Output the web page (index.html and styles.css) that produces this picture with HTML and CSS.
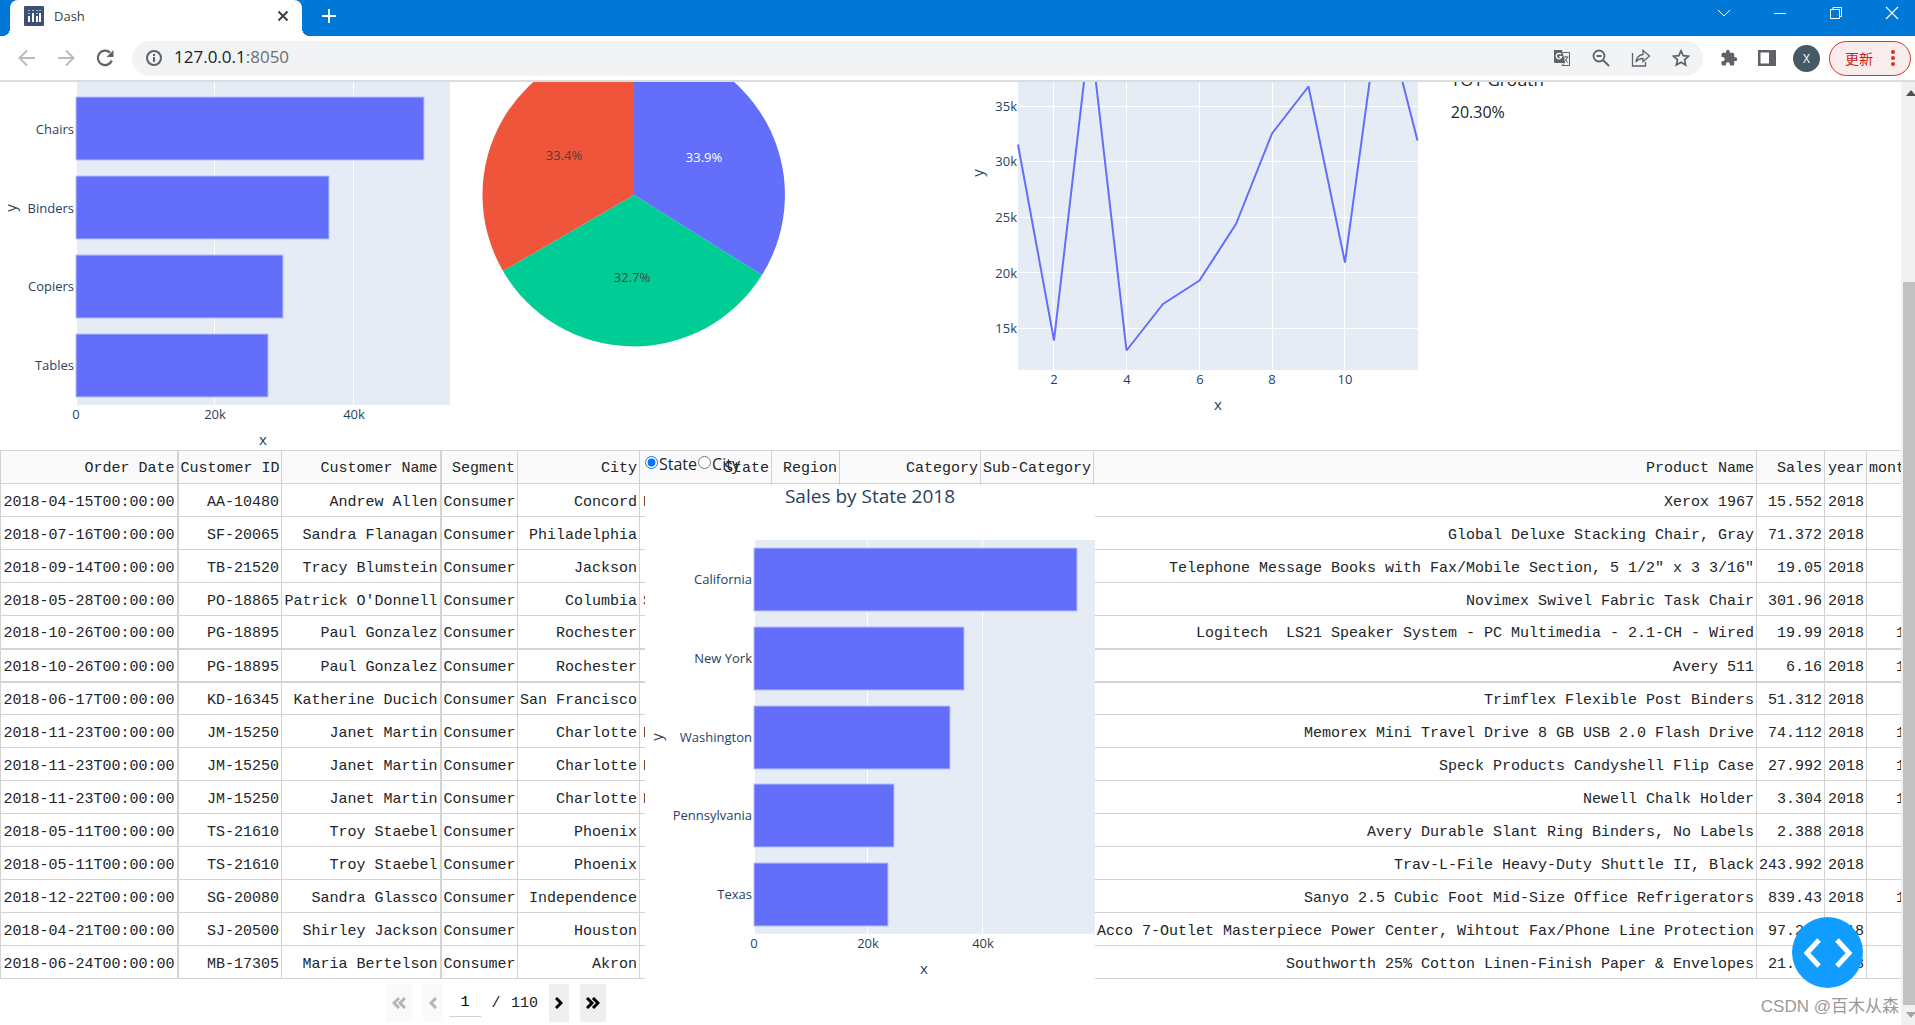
FILE: index.html
```html
<!DOCTYPE html>
<html lang="en">
<head>
<meta charset="utf-8">
<title>Dash</title>
<link rel="stylesheet" href="styles.css">
</head>
<body>
<header class="browser">
  <div class="tabstrip">
    <div class="tab">
      <svg class="favicon" width="20" height="20" viewBox="0 0 20 20"><rect width="20" height="20" rx="1" fill="#3f4f75"/><g fill="#fff"><rect x="4" y="10" width="2" height="6"/><rect x="8" y="7" width="2" height="9"/><rect x="12" y="10" width="2" height="6"/><rect x="15" y="7" width="2" height="9"/></g><g fill="#7fd0b8"><rect x="4" y="4" width="2" height="1"/><rect x="4" y="7" width="2" height="1"/><rect x="8" y="4" width="2" height="1"/><rect x="12" y="4" width="2" height="1"/><rect x="12" y="7" width="2" height="1"/><rect x="15" y="4" width="2" height="1"/></g></svg>
      <span class="tab-title">Dash</span>
      <button class="icon-btn" aria-label="Close tab"><svg width="12" height="12" viewBox="0 0 12 12"><path d="M1.5 1.5l9 9M10.5 1.5l-9 9" stroke="#3c4043" stroke-width="2"/></svg></button>
    </div>
    <button class="icon-btn new-tab" aria-label="New tab"><svg width="16" height="16" viewBox="0 0 16 16"><path d="M8 1v14M1 8h14" stroke="#fff" stroke-width="2"/></svg></button>
    <div class="window-controls">
      <button class="icon-btn" aria-label="Search tabs"><svg width="14" height="14" viewBox="0 0 14 14"><path d="M1 4l6 6 6-6" fill="none" stroke="#fff"/></svg></button>
      <button class="icon-btn" aria-label="Minimize"><svg width="14" height="14" viewBox="0 0 14 14"><path d="M1 7.500h12" stroke="#fff"/></svg></button>
      <button class="icon-btn" aria-label="Restore"><svg width="14" height="14" viewBox="0 0 14 14"><path d="M1.500 3.500h9v9h-9zM4 3.500v-2h8.500v9h-2" fill="none" stroke="#fff"/></svg></button>
      <button class="icon-btn" aria-label="Close"><svg width="14" height="14" viewBox="0 0 14 14"><path d="M1 1l12 12M13 1L1 13" stroke="#fff" stroke-width="1.200"/></svg></button>
    </div>
  </div>
  <div class="toolbar">
    <div class="nav">
      <button class="icon-btn" aria-label="Back"><svg width="18" height="18" viewBox="0 0 18 18"><path d="M17 9H2M9 1.500L1.500 9 9 16.500" fill="none" stroke="#babcbe" stroke-width="2"/></svg></button>
      <button class="icon-btn" aria-label="Forward"><svg width="18" height="18" viewBox="0 0 18 18"><path d="M1 9h15M9 1.500L16.500 9 9 16.500" fill="none" stroke="#babcbe" stroke-width="2"/></svg></button>
      <button class="icon-btn" aria-label="Reload"><svg width="18" height="18" viewBox="0 0 18 18"><path d="M15.800 11.500A7.200 7.200 0 1 1 14 3.600" fill="none" stroke="#5f6368" stroke-width="2.200"/><path d="M17.500 1v7h-7z" fill="#5f6368"/></svg></button>
    </div>
    <div class="omnibox">
      <svg width="18" height="18" viewBox="0 0 18 18"><circle cx="9" cy="9" r="7" fill="none" stroke="#5f6368" stroke-width="2"/><path d="M9 8v5M9 5v2" stroke="#5f6368" stroke-width="2"/></svg>
      <span class="url">127.0.0.1<span class="port">:8050</span></span>
      <div class="omni-icons">
        <svg width="18" height="18" viewBox="0 0 18 18"><path d="M1 1h8l3 13H2a1 1 0 0 1-1-1z" fill="#5f6368"/><path d="M10 3.500h6.500v13H9l2-2" fill="none" stroke="#5f6368"/><path d="M8 5.300a2.700 2.700 0 1 0 .6 2.400H6.300" fill="none" stroke="#fff" stroke-width="1.300"/><path d="M10.500 8h5M13 7v1M14.500 8c-.5 2.500-2 4-3.500 5M11.500 9.500c1 2 2 3 3.500 4" fill="none" stroke="#5f6368"/></svg>
        <svg width="18" height="18" viewBox="0 0 18 18"><circle cx="7" cy="7" r="5.500" fill="none" stroke="#5f6368" stroke-width="1.800"/><path d="M11 11l6 6M4.500 7h5" stroke="#5f6368" stroke-width="1.800"/></svg>
        <svg width="20" height="18" viewBox="0 0 20 18"><path d="M1.500 4v13h13v-4" fill="none" stroke="#5f6368" stroke-width="1.300"/><path d="M12 1.500l6.500 5.500-6.500 5.500V9.500c-3 0-5 .8-7 3.500.6-4.500 3-7 7-7.500z" fill="none" stroke="#5f6368" stroke-width="1.300"/></svg>
        <svg width="18" height="18" viewBox="0 0 18 18"><path d="M9 1.800l2.200 4.900 5.300.5-4 3.600 1.200 5.300L9 13.300l-4.700 2.800 1.200-5.300-4-3.600 5.300-.5z" fill="none" stroke="#5f6368" stroke-width="1.700"/></svg>
      </div>
    </div>
    <div class="actions">
      <svg width="18" height="18" viewBox="0 0 24 24"><path d="M20.500 11H19V7a2 2 0 0 0-2-2h-4V3.500a2.500 2.500 0 0 0-5 0V5H4a2 2 0 0 0-2 2v3.800h1.500a2.700 2.700 0 0 1 0 5.400H2V20a2 2 0 0 0 2 2h3.800v-1.500a2.700 2.700 0 0 1 5.400 0V22H17a2 2 0 0 0 2-2v-4h1.500a2.500 2.500 0 0 0 0-5z" fill="#5f6368"/></svg>
      <svg width="18" height="18" viewBox="0 0 18 18"><path d="M0 1h18v16H0zM2.500 3.500v11H11v-11z" fill="#5f6368" fill-rule="evenodd"/></svg>
      <span class="avatar">X</span>
      <button class="update">更新<svg width="4" height="16" viewBox="0 0 4 16"><g fill="#d93025"><circle cx="2" cy="2" r="2"/><circle cx="2" cy="8" r="2"/><circle cx="2" cy="14" r="2"/></g></svg></button>
    </div>
  </div>
</header>

<main class="viewport">
  <div class="page">
    <section class="charts">
      <svg class="chart" viewBox="0 0 475 368" preserveAspectRatio="xMinYMin">
        <rect x="77" y="0" width="373" height="323" fill="#e5ecf6"/>
        <path d="M214.500 0v323M353.500 0v323" stroke="#fff"/>
        <g class="bar"><rect x="76" y="15" width="348" height="63"/><rect x="76" y="94" width="253" height="63"/><rect x="76" y="173" width="207" height="63"/><rect x="76" y="252" width="192" height="63"/></g>
        <g class="tick end"><text x="74" y="52">Chairs</text><text x="74" y="131">Binders</text><text x="74" y="209">Copiers</text><text x="74" y="288">Tables</text></g>
        <g class="tick mid"><text x="76" y="337">0</text><text x="215" y="337">20k</text><text x="354" y="337">40k</text></g>
        <text class="axis" x="263" y="363">x</text>
        <text class="axis" transform="translate(16 126) rotate(-90)">y</text>
      </svg>
      <svg class="chart" viewBox="475 0 475 368" preserveAspectRatio="xMinYMin">
        <path d="M634 113V-38A151 151 0 0 1 762 193z" fill="#636efa"/>
        <path d="M634 113L762 193A151 151 0 0 1 503 189z" fill="#00cc96"/>
        <path d="M634 113L503 189A151 151 0 0 1 634-38z" fill="#ef553b"/>
        <g class="tick mid"><text x="704" y="80" class="light">33.9%</text><text x="564" y="78" class="dark">33.4%</text><text x="632" y="200" class="dark">32.7%</text></g>
      </svg>
      <svg class="chart" viewBox="951 0 475 368" preserveAspectRatio="xMinYMin">
        <rect x="1018" y="0" width="400" height="288" fill="#e5ecf6"/>
        <path d="M1018 24.500h400M1018 79.500h400M1018 135.500h400M1018 190.500h400M1018 246.500h400M1053.500 0v288M1126.500 0v288M1199.500 0v288M1272.500 0v288M1344.500 0v288" stroke="#fff"/>
        <path d="M1018 62.500L1054 258.500 1090-52 1126.500 268.500 1163 222 1199.500 198.500 1236 142 1272 51.500 1308.500 4.500 1345 180.500 1381-84 1417.500 58.500" fill="none" stroke="#636efa" stroke-width="2" stroke-linejoin="bevel"/>
        <g class="tick end"><text x="1017" y="29">35k</text><text x="1017" y="84">30k</text><text x="1017" y="140">25k</text><text x="1017" y="196">20k</text><text x="1017" y="251">15k</text></g>
        <g class="tick mid"><text x="1054" y="302">2</text><text x="1127" y="302">4</text><text x="1200" y="302">6</text><text x="1272" y="302">8</text><text x="1345" y="302">10</text></g>
        <text class="axis" x="1218" y="328">x</text>
        <text class="axis" transform="translate(983 91) rotate(-90)">y</text>
      </svg>
      <div class="kpi">
        <h2>YOY Grouth</h2>
        <p>20.30%</p>
      </div>
    </section>

    <section class="orders">
      <table>
        <colgroup><col class="w-date"><col class="w-id"><col class="w-name"><col class="w-segment"><col class="w-city"><col class="w-state"><col class="w-num"><col class="w-category"><col class="w-sub"><col class="w-product"><col class="w-num"><col class="w-year"><col class="w-month"></colgroup>
        <thead><tr><th>Order Date</th><th>Customer ID</th><th>Customer Name</th><th>Segment</th><th>City</th><th>State</th><th>Region</th><th>Category</th><th>Sub-Category</th><th>Product Name</th><th>Sales</th><th>year</th><th>month</th></tr></thead>
        <tbody>
          <tr><td>2018-04-15T00:00:00</td><td>AA-10480</td><td>Andrew Allen</td><td>Consumer</td><td>Concord</td><td>North Carolina</td><td></td><td></td><td></td><td>Xerox 1967</td><td>15.552</td><td>2018</td><td></td></tr>
          <tr><td>2018-07-16T00:00:00</td><td>SF-20065</td><td>Sandra Flanagan</td><td>Consumer</td><td>Philadelphia</td><td></td><td></td><td></td><td></td><td>Global Deluxe Stacking Chair, Gray</td><td>71.372</td><td>2018</td><td></td></tr>
          <tr><td>2018-09-14T00:00:00</td><td>TB-21520</td><td>Tracy Blumstein</td><td>Consumer</td><td>Jackson</td><td></td><td></td><td></td><td></td><td>Telephone Message Books with Fax/Mobile Section, 5 1/2" x 3 3/16"</td><td>19.05</td><td>2018</td><td></td></tr>
          <tr><td>2018-05-28T00:00:00</td><td>PO-18865</td><td>Patrick O'Donnell</td><td>Consumer</td><td>Columbia</td><td>South Carolina</td><td></td><td></td><td></td><td>Novimex Swivel Fabric Task Chair</td><td>301.96</td><td>2018</td><td></td></tr>
          <tr class="rule"><td>2018-10-26T00:00:00</td><td>PG-18895</td><td>Paul Gonzalez</td><td>Consumer</td><td>Rochester</td><td></td><td></td><td></td><td></td><td>Logitech&nbsp; LS21 Speaker System - PC Multimedia - 2.1-CH - Wired</td><td>19.99</td><td>2018</td><td>10</td></tr>
          <tr class="rule"><td>2018-10-26T00:00:00</td><td>PG-18895</td><td>Paul Gonzalez</td><td>Consumer</td><td>Rochester</td><td></td><td></td><td></td><td></td><td>Avery 511</td><td>6.16</td><td>2018</td><td>10</td></tr>
          <tr><td>2018-06-17T00:00:00</td><td>KD-16345</td><td>Katherine Ducich</td><td>Consumer</td><td>San Francisco</td><td></td><td></td><td></td><td></td><td>Trimflex Flexible Post Binders</td><td>51.312</td><td>2018</td><td></td></tr>
          <tr><td>2018-11-23T00:00:00</td><td>JM-15250</td><td>Janet Martin</td><td>Consumer</td><td>Charlotte</td><td>North Carolina</td><td></td><td></td><td></td><td>Memorex Mini Travel Drive 8 GB USB 2.0 Flash Drive</td><td>74.112</td><td>2018</td><td>11</td></tr>
          <tr><td>2018-11-23T00:00:00</td><td>JM-15250</td><td>Janet Martin</td><td>Consumer</td><td>Charlotte</td><td>North Carolina</td><td></td><td></td><td></td><td>Speck Products Candyshell Flip Case</td><td>27.992</td><td>2018</td><td>11</td></tr>
          <tr><td>2018-11-23T00:00:00</td><td>JM-15250</td><td>Janet Martin</td><td>Consumer</td><td>Charlotte</td><td>North Carolina</td><td></td><td></td><td></td><td>Newell Chalk Holder</td><td>3.304</td><td>2018</td><td>11</td></tr>
          <tr><td>2018-05-11T00:00:00</td><td>TS-21610</td><td>Troy Staebel</td><td>Consumer</td><td>Phoenix</td><td></td><td></td><td></td><td></td><td>Avery Durable Slant Ring Binders, No Labels</td><td>2.388</td><td>2018</td><td></td></tr>
          <tr><td>2018-05-11T00:00:00</td><td>TS-21610</td><td>Troy Staebel</td><td>Consumer</td><td>Phoenix</td><td></td><td></td><td></td><td></td><td>Trav-L-File Heavy-Duty Shuttle II, Black</td><td>243.992</td><td>2018</td><td></td></tr>
          <tr><td>2018-12-22T00:00:00</td><td>SG-20080</td><td>Sandra Glassco</td><td>Consumer</td><td>Independence</td><td></td><td></td><td></td><td></td><td>Sanyo 2.5 Cubic Foot Mid-Size Office Refrigerators</td><td>839.43</td><td>2018</td><td>12</td></tr>
          <tr><td>2018-04-21T00:00:00</td><td>SJ-20500</td><td>Shirley Jackson</td><td>Consumer</td><td>Houston</td><td></td><td></td><td></td><td></td><td>Acco 7-Outlet Masterpiece Power Center, Wihtout Fax/Phone Line Protection</td><td>97.264</td><td>2018</td><td></td></tr>
          <tr><td>2018-06-24T00:00:00</td><td>MB-17305</td><td>Maria Bertelson</td><td>Consumer</td><td>Akron</td><td></td><td></td><td></td><td></td><td>Southworth 25% Cotton Linen-Finish Paper &amp; Envelopes</td><td>21.936</td><td>2018</td><td></td></tr>
        </tbody>
      </table>
      <nav class="pager">
        <button disabled aria-label="First page"><svg width="14" height="12" viewBox="0 0 14 12"><path d="M7 1L2 6l5 5M13 1L8 6l5 5"/></svg></button>
        <button disabled class="single" aria-label="Previous page"><svg width="8" height="12" viewBox="0 0 8 12"><path d="M7 1L2 6l5 5"/></svg></button>
        <span class="pages"><input value="1" aria-label="Page"><span>/</span><span>110</span></span>
        <button class="single" aria-label="Next page"><svg width="8" height="12" viewBox="0 0 8 12"><path d="M1 1l5 5-5 5"/></svg></button>
        <button aria-label="Last page"><svg width="14" height="12" viewBox="0 0 14 12"><path d="M1 1l5 5-5 5M7 1l5 5-5 5"/></svg></button>
      </nav>

      <div class="sales-panel">
        <div class="choices">
          <label><input type="radio" name="level" checked>State</label><label><input type="radio" name="level">City</label>
        </div>
        <svg class="sales-chart" viewBox="645 485 450 540" preserveAspectRatio="xMinYMin">
          <text class="title" x="870" y="503">Sales by State 2018</text>
          <rect x="755" y="540" width="340" height="394" fill="#e5ecf6"/>
          <path d="M867.500 540v394M982.500 540v394" stroke="#fff"/>
          <g class="bar"><rect x="754" y="548" width="323" height="63"/><rect x="754" y="627" width="210" height="63"/><rect x="754" y="706" width="196" height="63"/><rect x="754" y="784" width="140" height="63"/><rect x="754" y="863" width="134" height="63"/></g>
          <g class="tick end"><text x="752" y="584">California</text><text x="752" y="663">New York</text><text x="752" y="742">Washington</text><text x="752" y="820">Pennsylvania</text><text x="752" y="899">Texas</text></g>
          <g class="tick mid"><text x="754" y="948">0</text><text x="868" y="948">20k</text><text x="983" y="948">40k</text></g>
          <text class="axis" x="924" y="974">x</text>
          <text class="axis" transform="translate(662 737) rotate(-90)">y</text>
        </svg>
      </div>
    </section>

    <button class="debug" aria-label="Debug menu"><svg width="48" height="30" viewBox="0 0 48 30"><path d="M15 2L3 15l12 13M33 2l12 13-12 13" fill="none" stroke="#fff" stroke-width="5"/></svg></button>
    <span class="watermark">CSDN @百木从森</span>
  </div>
  <div class="scrollbar">
    <svg width="9" height="6" viewBox="0 0 9 6"><path d="M0 6l5-6 5 6z" fill="#505050"/></svg>
    <div class="track"><div class="thumb"></div></div>
    <svg width="9" height="6" viewBox="0 0 9 6"><path d="M0 0l5 6 5-6z" fill="#a3a3a3"/></svg>
  </div>
</main>
</body>
</html>
```
FILE: styles.css
```css
* { box-sizing: border-box; }
body {
  margin: 0;
  height: 100vh;
  display: flex;
  flex-direction: column;
  overflow: hidden;
  background: #fff;
  color: #212529;
  font-family: "Open Sans", "Noto Sans CJK SC", sans-serif;
  font-size: 16px;
}
button { border: 0; padding: 0; font: inherit; }
svg { display: block; flex: none; }

/* Browser frame */
.browser { border-bottom: 2px solid #dadcde; }
.tabstrip { display: flex; align-items: center; height: 36px; padding-left: 10px; background: #0078d7; }
.tab {
  display: flex; align-items: center; gap: 10px;
  width: 292px; height: 36px; padding: 0 13px 4px 14px;
  background: #fff; border-radius: 8px 8px 0 0;
  position: relative;
}
.tab::before, .tab::after {
  content: ""; position: absolute; bottom: 0; width: 8px; height: 8px;
}
.tab::before { left: -8px; background: radial-gradient(circle at 0 0, transparent 8px, #fff 8px); }
.tab::after { right: -8px; background: radial-gradient(circle at 100% 0, transparent 8px, #fff 8px); }
.tab-title { flex: 1; font-size: 13px; color: #3c4043; }
.icon-btn { display: grid; place-items: center; background: none; }
.new-tab { margin-left: 19px; padding-bottom: 4px; }
.window-controls { display: flex; gap: 42px; margin-left: auto; padding: 0 16px 10px 0; }
.toolbar { display: flex; align-items: center; height: 44px; padding: 0 4px 0 18px; }
.nav { display: flex; gap: 21px; width: 114px; }
.omnibox {
  flex: 1; display: flex; align-items: center; gap: 11px;
  height: 35px; padding: 0 13px; border-radius: 18px; background: #f1f3f4;
}
.url { flex: 1; font-size: 17px; line-height: 22px; padding-bottom: 2px; color: #202124; }
.port { color: #6b6f74; }
.omni-icons { display: flex; gap: 21px; }
.actions { display: flex; align-items: center; gap: 20px; padding-left: 17px; }
.avatar {
  display: grid; place-items: center; width: 27px; height: 27px; margin: 0 -11px 0 -3px;
  border-radius: 50%; background: #455a64; color: #fff; font-size: 12px;
}
.update {
  display: flex; align-items: center; justify-content: space-between;
  width: 82px; height: 35px; padding: 0 15px;
  border: 1px solid #d93025; border-radius: 18px; background: #f9ecec;
  color: #c5221f; font-size: 14px;
}

/* Scrolled page */
.viewport { flex: 1; min-height: 0; display: grid; grid-template-columns: 1fr 14px; }
.page { position: relative; overflow: hidden; }
.charts { display: grid; grid-template-columns: repeat(4, 1fr); height: 368px; overflow: hidden; }
.chart { width: 100%; height: 368px; }
.bar rect { fill: #636efa; stroke: #b9c2fb; stroke-width: 1px; }
.tick { font-size: 13px; fill: #2a3f5f; }
.end { text-anchor: end; }
.mid, .axis, .title { text-anchor: middle; }
.tick .light { fill: #fff; }
.tick .dark { fill: #444; }
.axis { font-size: 15px; fill: #2a3f5f; }
.title { font-size: 19px; fill: #2a3f5f; }
.kpi { padding-left: 25px; }
.kpi h2 { margin: -14px 0 7px; font-size: 17px; line-height: 24px; font-weight: 500; }
.kpi p { margin: 0; line-height: 26px; }

/* Orders table */
.orders { position: relative; }
table {
  width: 1916px; table-layout: fixed; border-collapse: collapse;
  font-family: "Liberation Mono", monospace; font-size: 15px;
}
th, td {
  height: 33px; padding: 3px 2px 0; border: 1px solid #d3d3d3;
  text-align: right; font-weight: 400; line-height: 20px; white-space: nowrap;
}
td { padding-top: 5px; }
th { background: #fafafa; }
th:nth-child(1), td:nth-child(1), th:nth-child(3), td:nth-child(3) { border-right-width: 2px; }
.rule td { border-bottom-width: 2px; }
.w-date { width: 177px; }
.w-id { width: 104px; }
.w-name { width: 159px; }
.w-segment { width: 77px; }
.w-city { width: 122px; }
.w-state { width: 132px; }
.w-num { width: 68px; }
.w-category { width: 141px; }
.w-sub { width: 113px; }
.w-product { width: 663px; }
.w-year { width: 42px; }
.w-month { width: 50px; }

.pager {
  display: flex; align-items: center; gap: 11px; padding: 5px 0 4px 386px;
  font-family: "Liberation Mono", monospace; font-size: 15px;
}
.pager button { display: grid; place-items: center; width: 26px; height: 38px; background: #efefef; }
.pager .single { width: 20px; }
.pager path { fill: none; stroke: #000; stroke-width: 3px; }
.pager button:disabled { background: #fafafa; }
.pager button:disabled path { stroke: #b5b5b5; }
.pages { display: flex; align-items: center; justify-content: space-between; width: 89px; margin-left: -5px; }
.pages input {
  width: 32px; height: 28px; padding: 0; border: 0; border-bottom: 1px solid #d3d3d3;
  background: none; font: inherit; text-align: center;
}

/* Sales panel, floats over the table */
.sales-panel { position: absolute; left: 645px; top: 0; width: 450px; }
.choices { display: flex; height: 35px; align-items: flex-start; padding-top: 2px; }
.choices label { display: flex; align-items: center; line-height: 24px; }
.choices input { width: 13px; height: 13px; margin: 0 1px 4px; }
.choices label:first-child input { margin-left: 0; }
.sales-chart { width: 100%; height: 540px; background: #fff; }

.debug {
  position: absolute; right: 38px; bottom: 37px; width: 71px; height: 71px;
  display: grid; place-items: center; border-radius: 50%; background: #119dff;
}
.watermark { position: absolute; right: 2px; bottom: 5px; font: 17px/26px "Liberation Sans", "Noto Sans CJK SC", sans-serif; color: #999; }

.scrollbar {
  display: flex; flex-direction: column; align-items: flex-end;
  padding: 8px 0 7px 2px; background: #f1f1f1;
}
.track { flex: 1; width: 100%; padding: 186px 0 7px; }
.thumb { height: 100%; background: #c1c1c1; }
```
